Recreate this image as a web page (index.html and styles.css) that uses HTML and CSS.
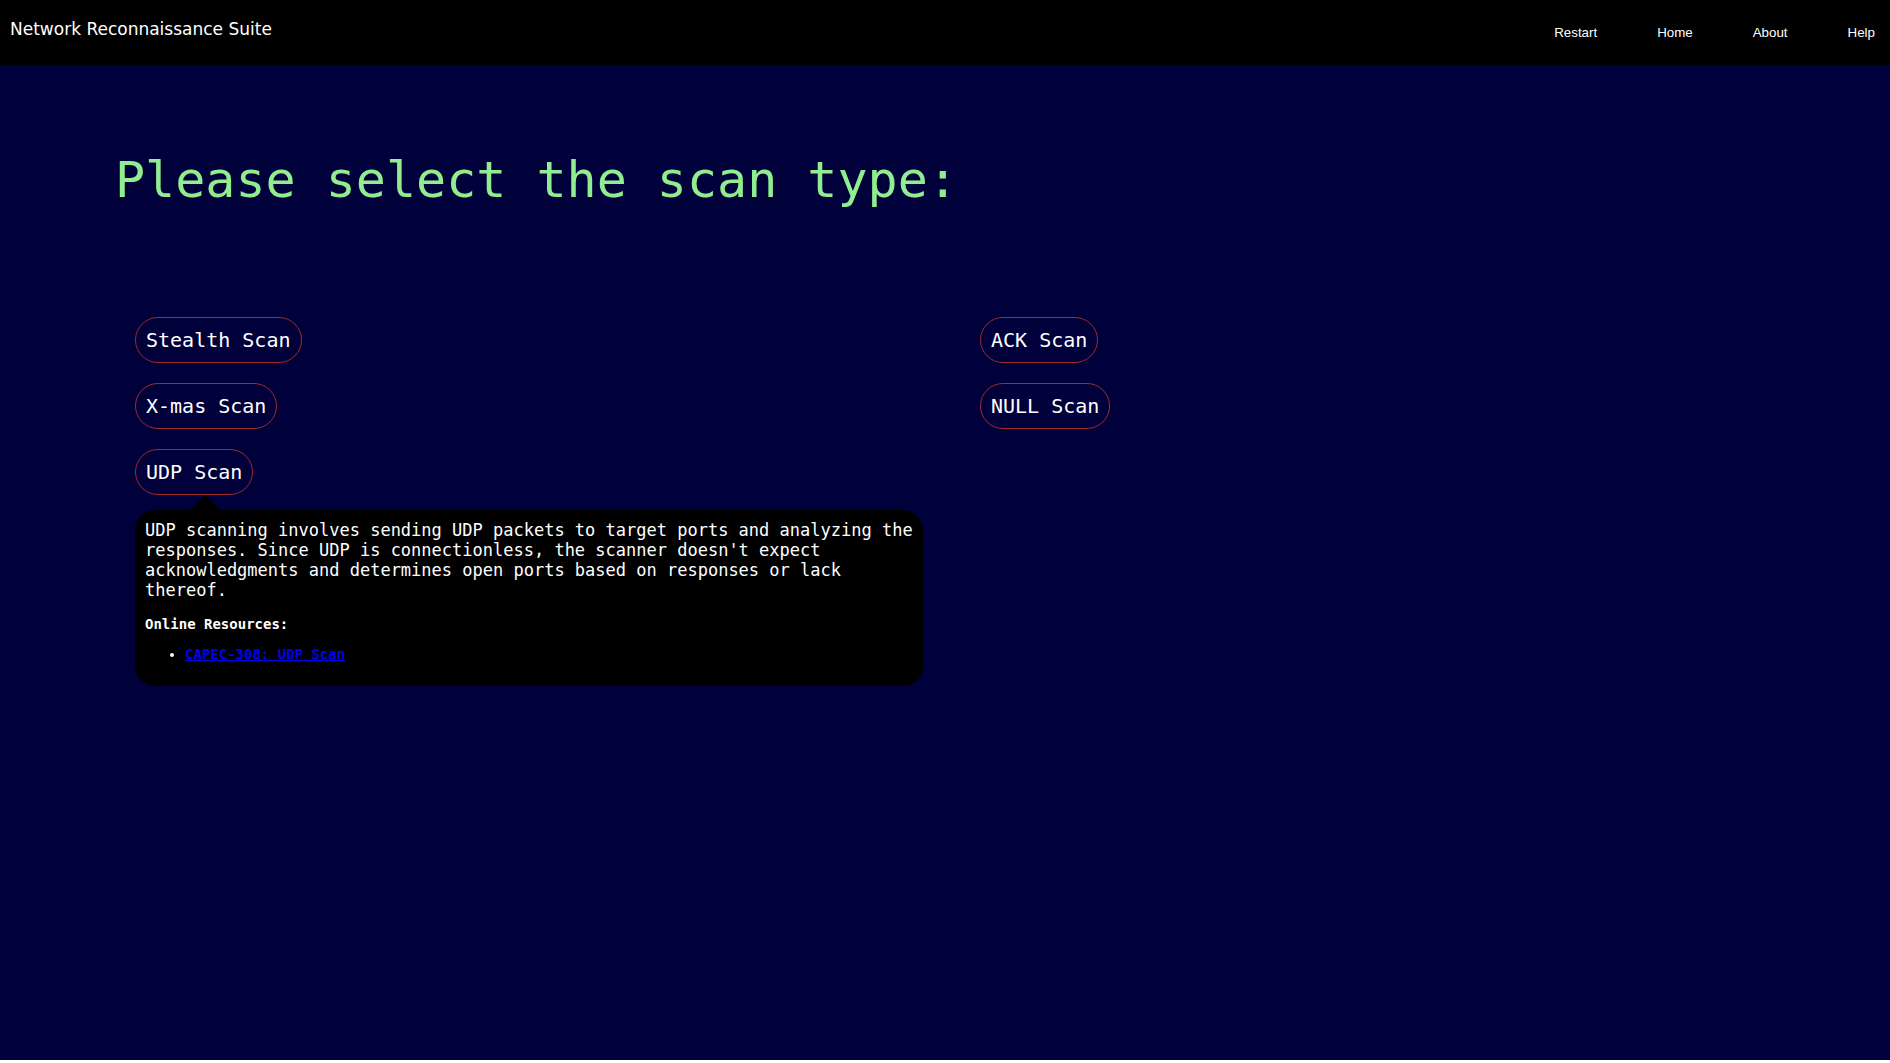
FILE: index.html
```html
<!DOCTYPE html>
<html lang="en">
<head>
<meta charset="utf-8">
<title>Network Reconnaissance Suite</title>
<link rel="stylesheet" href="styles.css">
</head>
<body>
<header class="topbar">
  <div class="brand">Network Reconnaissance Suite</div>
  <nav class="menu">
    <button type="button">Restart</button>
    <button type="button">Home</button>
    <button type="button">About</button>
    <button type="button">Help</button>
  </nav>
</header>
<main class="page">
  <h1 class="title">Please select the scan type:</h1>
  <div class="scans">
    <div class="scan"><button type="button" class="pill">Stealth Scan</button></div>
    <div class="scan"><button type="button" class="pill">ACK Scan</button></div>
    <div class="scan"><button type="button" class="pill">X-mas Scan</button></div>
    <div class="scan"><button type="button" class="pill">NULL Scan</button></div>
    <div class="scan">
      <button type="button" class="pill" aria-describedby="udp-info">UDP Scan</button>
      <div class="tooltip" id="udp-info" role="tooltip">
        <p>UDP scanning involves sending UDP packets to target ports and analyzing the responses. Since UDP is connectionless, the scanner doesn't expect acknowledgments and determines open ports based on responses or lack thereof.</p>
        <div class="resources">
          <h2>Online Resources:</h2>
          <ul>
            <li><a href="#capec-308">CAPEC-308: UDP Scan</a></li>
          </ul>
        </div>
      </div>
    </div>
  </div>
</main>
</body>
</html>
```
FILE: styles.css
```css
* {
  box-sizing: border-box;
}

body {
  margin: 0;
  background: #fff;
  color: #fff;
  font-family: "DejaVu Sans Mono", monospace;
}

.topbar {
  display: flex;
  justify-content: space-between;
  height: 65px;
  padding-left: 10px;
  background: #000;
}

.brand {
  padding-top: 18px;
  font: 17px/22px "DejaVu Sans", sans-serif;
}

.menu {
  display: flex;
  align-items: center;
  gap: 30px;
}

.menu button {
  padding: 10px 15px;
  border: 0;
  background: none;
  color: #fff;
  font-family: "Liberation Sans", Arial, sans-serif;
}

.page {
  min-height: calc(100vh - 68px);
  padding: 85px 100px 0;
  background: #00003a;
}

.title {
  margin: 0 0 107px 15px;
  color: lightgreen;
  font-size: 50px;
  line-height: 60px;
  font-weight: normal;
}

.scans {
  display: grid;
  grid-template-columns: 1fr 1fr;
  row-gap: 20px;
}

.scan {
  position: relative;
  padding-left: 35px;
}

.pill {
  display: block;
  padding: 10px;
  border: 1px solid brown;
  border-radius: 25px;
  background: none;
  color: #fff;
  font: 20px/24px "DejaVu Sans Mono", monospace;
}

.tooltip {
  position: absolute;
  top: 100%;
  left: 35px;
  right: 22px;
  margin-top: 15px;
  padding: 10px;
  border-radius: 20px;
  background: #000;
}

.tooltip::before {
  content: "";
  position: absolute;
  bottom: 100%;
  left: 55px;
  border: 15px solid transparent;
  border-top-width: 0;
  border-bottom-color: #000;
}

.tooltip p {
  margin: 0;
  font-size: 17px;
  line-height: 20px;
}

.resources {
  margin: 16px 0 14px;
  font-size: 14px;
  line-height: 16px;
  font-weight: bold;
}

.resources h2 {
  margin: 0 0 14px;
  font-size: 14px;
}

.resources ul {
  margin: 0;
  padding-left: 40px;
}

.resources a {
  color: #0000ee;
}
```
